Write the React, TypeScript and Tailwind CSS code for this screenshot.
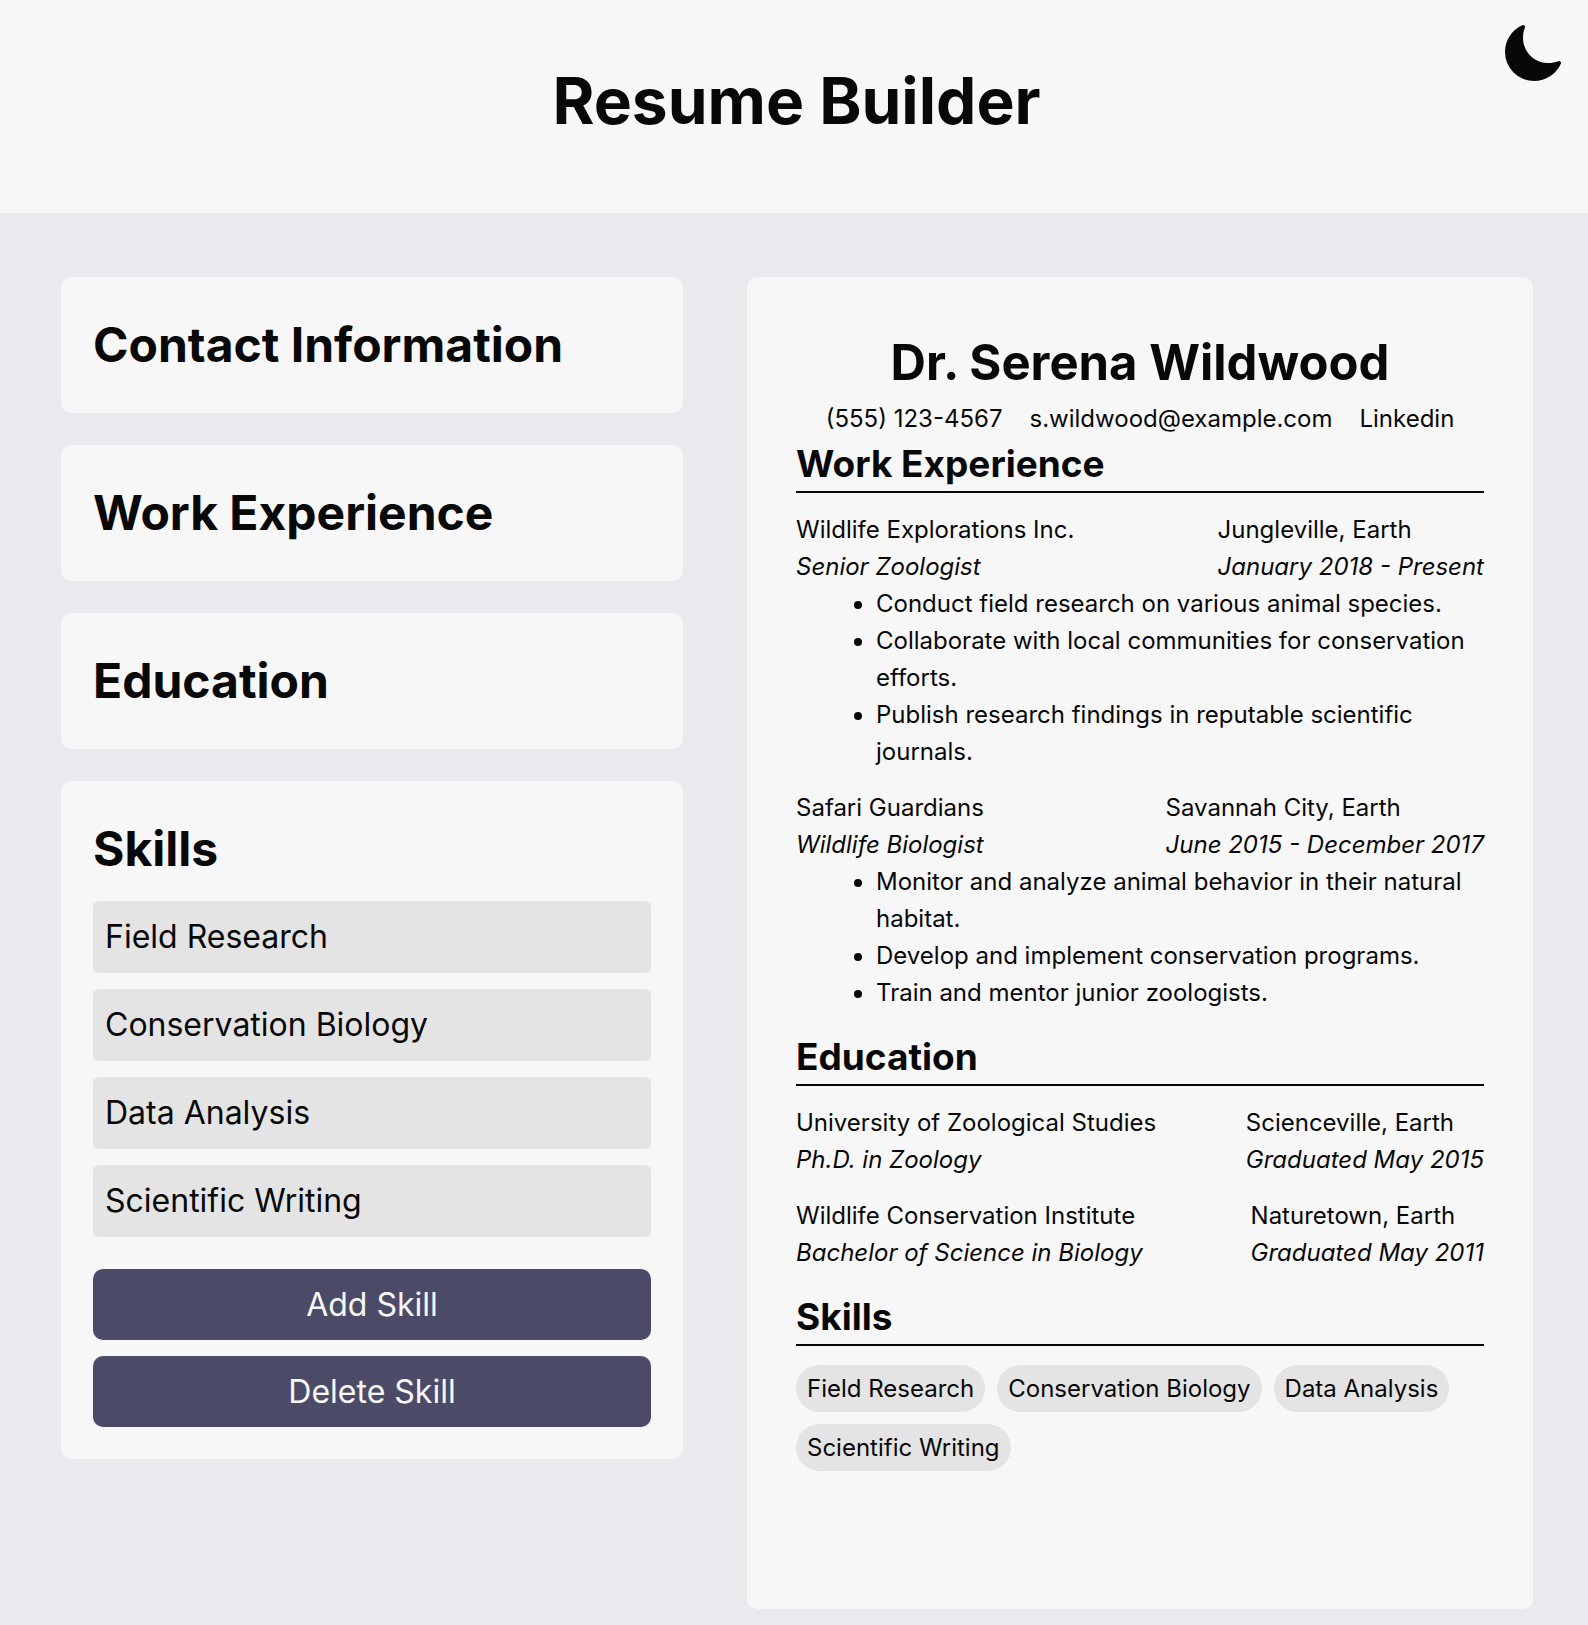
import { useState } from "react";
import { IoMoon } from "react-icons/io5";

type Entry = {
  place: string;
  role: string;
  location: string;
  date: string;
  points?: string[];
};

const work: Entry[] = [
  {
    place: "Wildlife Explorations Inc.",
    role: "Senior Zoologist",
    location: "Jungleville, Earth",
    date: "January 2018 - Present",
    points: [
      "Conduct field research on various animal species.",
      "Collaborate with local communities for conservation efforts.",
      "Publish research findings in reputable scientific journals.",
    ],
  },
  {
    place: "Safari Guardians",
    role: "Wildlife Biologist",
    location: "Savannah City, Earth",
    date: "June 2015 - December 2017",
    points: [
      "Monitor and analyze animal behavior in their natural habitat.",
      "Develop and implement conservation programs.",
      "Train and mentor junior zoologists.",
    ],
  },
];

const education: Entry[] = [
  {
    place: "University of Zoological Studies",
    role: "Ph.D. in Zoology",
    location: "Scienceville, Earth",
    date: "Graduated May 2015",
  },
  {
    place: "Wildlife Conservation Institute",
    role: "Bachelor of Science in Biology",
    location: "Naturetown, Earth",
    date: "Graduated May 2011",
  },
];

function Panel({ title, children }: { title: string; children?: React.ReactNode }) {
  return (
    <section className="rounded-[10px] bg-[#f7f7f7] p-8">
      <h2 className="text-[48px] leading-[72px] font-bold">
        <button type="button" className="block w-full text-left">
          {title}
        </button>
      </h2>
      {children}
    </section>
  );
}

function ResumeSection({ title, children }: { title: string; children: React.ReactNode }) {
  return (
    <section>
      <h3 className="border-b-2 border-[#080808] text-[37px] leading-[54px] font-bold">{title}</h3>
      {children}
    </section>
  );
}

function EntryList({ entries }: { entries: Entry[] }) {
  return (
    <>
      {entries.map((e) => (
        <article key={e.place} className="mt-[18px] mb-[19px]">
          <div className="flex justify-between">
            <div>
              <p>{e.place}</p>
              <p className="italic">{e.role}</p>
            </div>
            <div>
              <p>{e.location}</p>
              <p className="italic">{e.date}</p>
            </div>
          </div>
          {e.points && (
            <ul className="list-disc pl-20">
              {e.points.map((p) => (
                <li key={p}>{p}</li>
              ))}
            </ul>
          )}
        </article>
      ))}
    </>
  );
}

export default function App() {
  const [skills, setSkills] = useState([
    "Field Research",
    "Conservation Biology",
    "Data Analysis",
    "Scientific Writing",
  ]);

  return (
    <div className="min-h-screen bg-[#eae9ee] font-['Inter',sans-serif] text-[#080808]">
      <header className="relative bg-[#f7f7f7] pt-[53px] pb-16 pl-[5px] text-center">
        <h1 className="text-[64px] leading-[96px] font-bold">Resume Builder</h1>
        <button type="button" aria-label="Toggle dark mode" className="absolute top-[21px] right-[23px]">
          <IoMoon size={64} />
        </button>
      </header>

      <main className="grid grid-cols-[622fr_786fr] gap-16 pt-16 pr-[55px] pb-4 pl-[61px]">
        <div className="flex flex-col gap-8">
          <Panel title="Contact Information" />
          <Panel title="Work Experience" />
          <Panel title="Education" />
          <Panel title="Skills">
            <div className="mt-4 flex flex-col gap-4">
              {skills.map((skill, i) => (
                <input
                  key={i}
                  type="text"
                  aria-label={`Skill ${i + 1}`}
                  value={skill}
                  onChange={(ev) => setSkills(skills.map((s, j) => (j === i ? ev.target.value : s)))}
                  className="w-full rounded-md bg-[#e4e4e4] p-3 text-[32px] leading-[48px]"
                />
              ))}
            </div>
            <div className="mt-8 flex flex-col gap-4">
              <button
                type="button"
                onClick={() => setSkills([...skills, ""])}
                className="h-[71px] rounded-[10px] bg-[#4b4b68] text-[32px] text-[#f7f7f7]"
              >
                Add Skill
              </button>
              <button
                type="button"
                onClick={() => setSkills(skills.slice(0, -1))}
                className="h-[71px] rounded-[10px] bg-[#4b4b68] text-[32px] text-[#f7f7f7]"
              >
                Delete Skill
              </button>
            </div>
          </Panel>
        </div>

        <div className="rounded-[10px] bg-[#f7f7f7] px-[49px] pt-[49px] pb-[138px] text-[24px] leading-[37px]">
          <h2 className="text-center text-[49px] leading-[74px] font-bold">Dr. Serena Wildwood</h2>
          <div className="flex justify-center gap-[27px]">
            <p>(555) 123-4567</p>
            <a href="mailto:s.wildwood@example.com">s.wildwood@example.com</a>
            <a href="#linkedin">Linkedin</a>
          </div>
          <ResumeSection title="Work Experience">
            <EntryList entries={work} />
          </ResumeSection>
          <ResumeSection title="Education">
            <EntryList entries={education} />
          </ResumeSection>
          <ResumeSection title="Skills">
            <ul className="mt-[19px] flex flex-wrap gap-3">
              {skills.filter(Boolean).map((s) => (
                <li key={s} className="rounded-full bg-[#e4e4e4] px-[11px] py-[5px]">
                  {s}
                </li>
              ))}
            </ul>
          </ResumeSection>
        </div>
      </main>
    </div>
  );
}
